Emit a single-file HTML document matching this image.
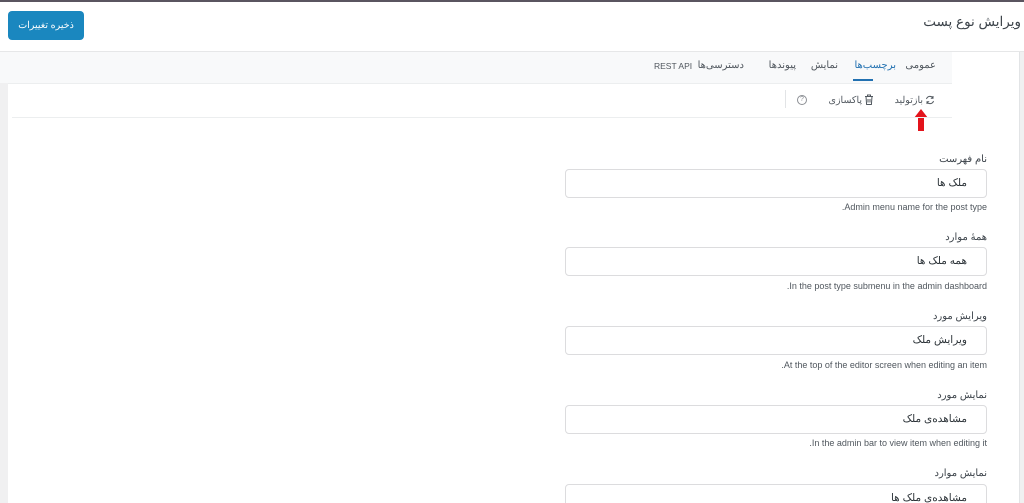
<!DOCTYPE html>
<html style="overflow:hidden"><head><meta charset="utf-8"><style>
*{margin:0;padding:0;box-sizing:border-box}
html,body{width:1024px;height:503px;overflow:hidden}
body{background:#fff;font-family:"Liberation Sans","Noto Sans CJK SC",sans-serif;position:relative;color:#3c434a}
.abs{position:absolute}
.rtl{direction:rtl}
.lbl{position:absolute;right:37px;font-size:10px;color:#3c434a;direction:rtl}
.inp{position:absolute;left:565px;width:422px;height:29px;border:1px solid #dcdcde;border-radius:4px;background:#fff;direction:rtl;font-size:10.5px;padding-right:19px;line-height:27px;color:#2c3338}
.help{position:absolute;right:37px;font-size:9px;color:#50575e;direction:rtl}
</style></head><body>
<div class="abs" style="left:0;top:0;width:1024px;height:2px;background:#5a5560"></div>
<div class="abs" style="left:8px;top:11px;width:76px;height:29px;background:#1a87bf;border-radius:4px;color:#fff;font-size:9.5px;text-align:center;line-height:29px;direction:rtl">ذخیره تغییرات</div>
<div class="abs rtl" style="right:3px;top:14px;font-size:13.5px;color:#3c434a">ویرایش نوع پست</div>
<div class="abs" style="left:0;top:51px;width:1024px;height:1px;background:#e6e7e8"></div>
<div class="abs" style="left:0;top:52px;width:952px;height:31px;background:#f8f9fa"></div>
<div class="abs" style="left:0;top:83px;width:8px;height:420px;background:#f0f0f1"></div>
<div class="abs" style="left:1019px;top:52px;width:5px;height:451px;background:#f0f0f1;border-left:1px solid #e2e4e6"></div>
<div class="abs" style="left:8px;top:83px;width:944px;height:1px;background:#eceeef"></div>
<div class="abs rtl" style="right:88px;top:60px;font-size:10px;color:#50575e">عمومی</div>
<div class="abs rtl" style="right:128px;top:60px;font-size:10px;color:#2271b1">برچسب‌ها</div>
<div class="abs" style="left:853px;top:79px;width:20px;height:2px;background:#2271b1"></div>
<div class="abs rtl" style="right:186px;top:60px;font-size:10px;color:#50575e">نمایش</div>
<div class="abs rtl" style="right:228px;top:60px;font-size:10px;color:#50575e">پیوندها</div>
<div class="abs rtl" style="right:280px;top:60px;font-size:10px;color:#50575e">دسترسی‌ها</div>
<div class="abs" style="left:654px;top:61px;font-size:8.5px;color:#50575e">REST API</div>
<svg class="abs" style="left:925px;top:95px" width="10" height="10" viewBox="0 0 10 10"><path d="M1.5 4A3.6 3.6 0 0 1 8 3M8.5 6A3.6 3.6 0 0 1 2 7M8 1v2.3H5.8M2 9V6.7h2.2" fill="none" stroke="#50575e" stroke-width="1"/></svg>
<div class="abs rtl" style="right:101px;top:95px;font-size:9.5px;color:#50575e">بازتولید</div>
<svg class="abs" style="left:864px;top:94px" width="10" height="11" viewBox="0 0 10 11"><path d="M1 2.5h8M3.5 2.5V1h3v1.5M2 2.5l.6 8h4.8l.6-8M4 5v3.5M6 5v3.5" fill="none" stroke="#50575e" stroke-width="1"/></svg>
<div class="abs rtl" style="right:162px;top:95px;font-size:9.5px;color:#50575e">پاکسازی</div>
<div class="abs" style="left:785px;top:90px;width:1px;height:18px;background:#e2e4e6"></div>
<div class="abs" style="left:797px;top:95px;width:10px;height:10px;border:1px solid #8c8f94;border-radius:50%;font-size:7px;line-height:8px;text-align:center;color:#8c8f94">?</div>
<svg class="abs" style="left:913px;top:109px" width="16" height="22" viewBox="0 0 16 22"><path d="M8 0L15 9H11V22H5V9H1Z" fill="#e3131b"/></svg>
<div class="abs" style="left:12px;top:117px;width:940px;height:1px;background:#eceeef"></div>

<div class="lbl" style="top:154px">نام فهرست</div>
<div class="inp" style="top:169px">ملک ها</div>
<div class="help" style="top:202px">Admin menu name for the post type.</div>

<div class="lbl" style="top:232px">همهٔ موارد</div>
<div class="inp" style="top:247px">همه ملک ها</div>
<div class="help" style="top:281px">In the post type submenu in the admin dashboard.</div>

<div class="lbl" style="top:311px">ویرایش مورد</div>
<div class="inp" style="top:326px">ویرایش ملک</div>
<div class="help" style="top:360px">At the top of the editor screen when editing an item.</div>

<div class="lbl" style="top:390px">نمایش مورد</div>
<div class="inp" style="top:405px">مشاهده‌ی ملک</div>
<div class="help" style="top:438px">In the admin bar to view item when editing it.</div>

<div class="lbl" style="top:468px">نمایش موارد</div>
<div class="inp" style="top:484px">مشاهده‌ی ملک ها</div>
</body></html>
